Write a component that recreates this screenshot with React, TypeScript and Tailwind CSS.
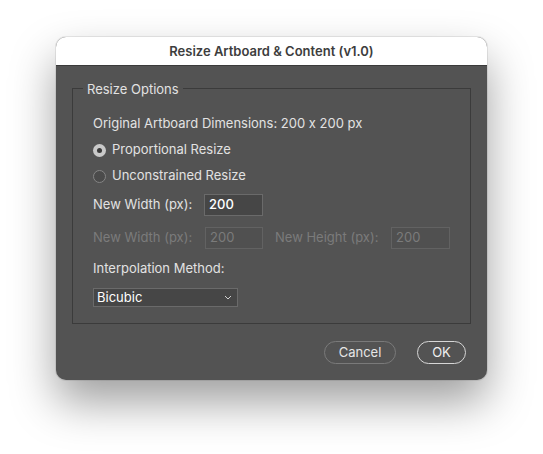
import React from "react";

const font = "font-['Inter','Liberation_Sans',sans-serif] [font-feature-settings:'calt'_0]";

function Radio({ checked, label }: { checked?: boolean; label: string }) {
  return (
    <div className="flex h-[26px] items-center gap-[6px]">
      {checked ? (
        <span className="grid h-[13px] w-[13px] place-items-center rounded-full bg-[#c9c9c9]">
          <span className="h-[5px] w-[5px] rounded-full bg-[#3a3a3a]" />
        </span>
      ) : (
        <span className="h-[13px] w-[13px] rounded-full border border-[#858585] bg-[#4b4b4b]" />
      )}
      <span>{label}</span>
    </div>
  );
}

export default function App() {
  return (
    <div className={`min-h-[454px] w-[543px] bg-white pt-[37px] pl-[56px] ${font} text-[13px]`}>
      <div className="flex h-[343px] w-[431px] flex-col overflow-hidden rounded-[10px] bg-[#535353] shadow-[0_22px_45px_rgba(0,0,0,0.38),0_0_0_1px_rgba(0,0,0,0.08)]">
        <div className="flex h-[29px] shrink-0 items-center justify-center border-b border-[#3a3a3a] bg-white pt-[1px] font-semibold text-[#3d3d3d]">
          Resize Artboard &amp; Content (v1.0)
        </div>

        <div className="flex flex-1 flex-col px-4 pt-[22px] text-[#e2e2e2]">
          <div className="relative h-[236px] border border-[#3b3b3b] pl-5 pt-[22px]">
            <span className="absolute -top-[8px] left-[10px] bg-[#535353] px-1 leading-[16px]">
              Resize Options
            </span>

            <div className="flex h-[26px] items-center">
              Original Artboard Dimensions: 200 x 200 px
            </div>
            <Radio checked label="Proportional Resize" />
            <Radio label="Unconstrained Resize" />

            <div className="mt-[5px] flex h-[22px] items-center">
              <span className="w-[111px]">New Width (px):</span>
              <div className="flex h-[22px] w-[59px] items-center border border-[#6a6a6a] bg-[#464646] px-[4px] font-medium text-white">
                200
              </div>
            </div>

            <div className="mt-[11px] flex h-[22px] items-center text-[#7b7b7b]">
              <span className="w-[112px]">New Width (px):</span>
              <div className="flex h-[22px] w-[58px] items-center border border-[#626262] bg-[#505050] px-[4px]">
                200
              </div>
              <span className="ml-[12px] w-[116px]">New Height (px):</span>
              <div className="flex h-[22px] w-[59px] items-center border border-[#626262] bg-[#505050] px-[4px]">
                200
              </div>
            </div>

            <div className="mt-[11px] flex h-[18px] items-center">Interpolation Method:</div>

            <div className="mt-[10px] flex h-[19px] w-[145px] items-center justify-between border border-[#6a6a6a] bg-[#464646] pl-[3px] pr-[5px] text-white">
              <span>Bicubic</span>
              <svg width="8" height="5" viewBox="0 0 8 5" fill="none">
                <path d="M1 1l3 3 3-3" stroke="#d0d0d0" strokeWidth="1" />
              </svg>
            </div>
          </div>

          <div className="mt-[17px] flex justify-end gap-[21px] pr-[5px]">
            <button className="h-[23px] w-[72px] rounded-full border border-[#7a7a7a] text-[#e6e6e6]">
              Cancel
            </button>
            <button className="h-[23px] w-[49px] rounded-full border-[1.5px] border-[#d6d6d6] text-[#f0f0f0]">
              OK
            </button>
          </div>
        </div>
      </div>
    </div>
  );
}
